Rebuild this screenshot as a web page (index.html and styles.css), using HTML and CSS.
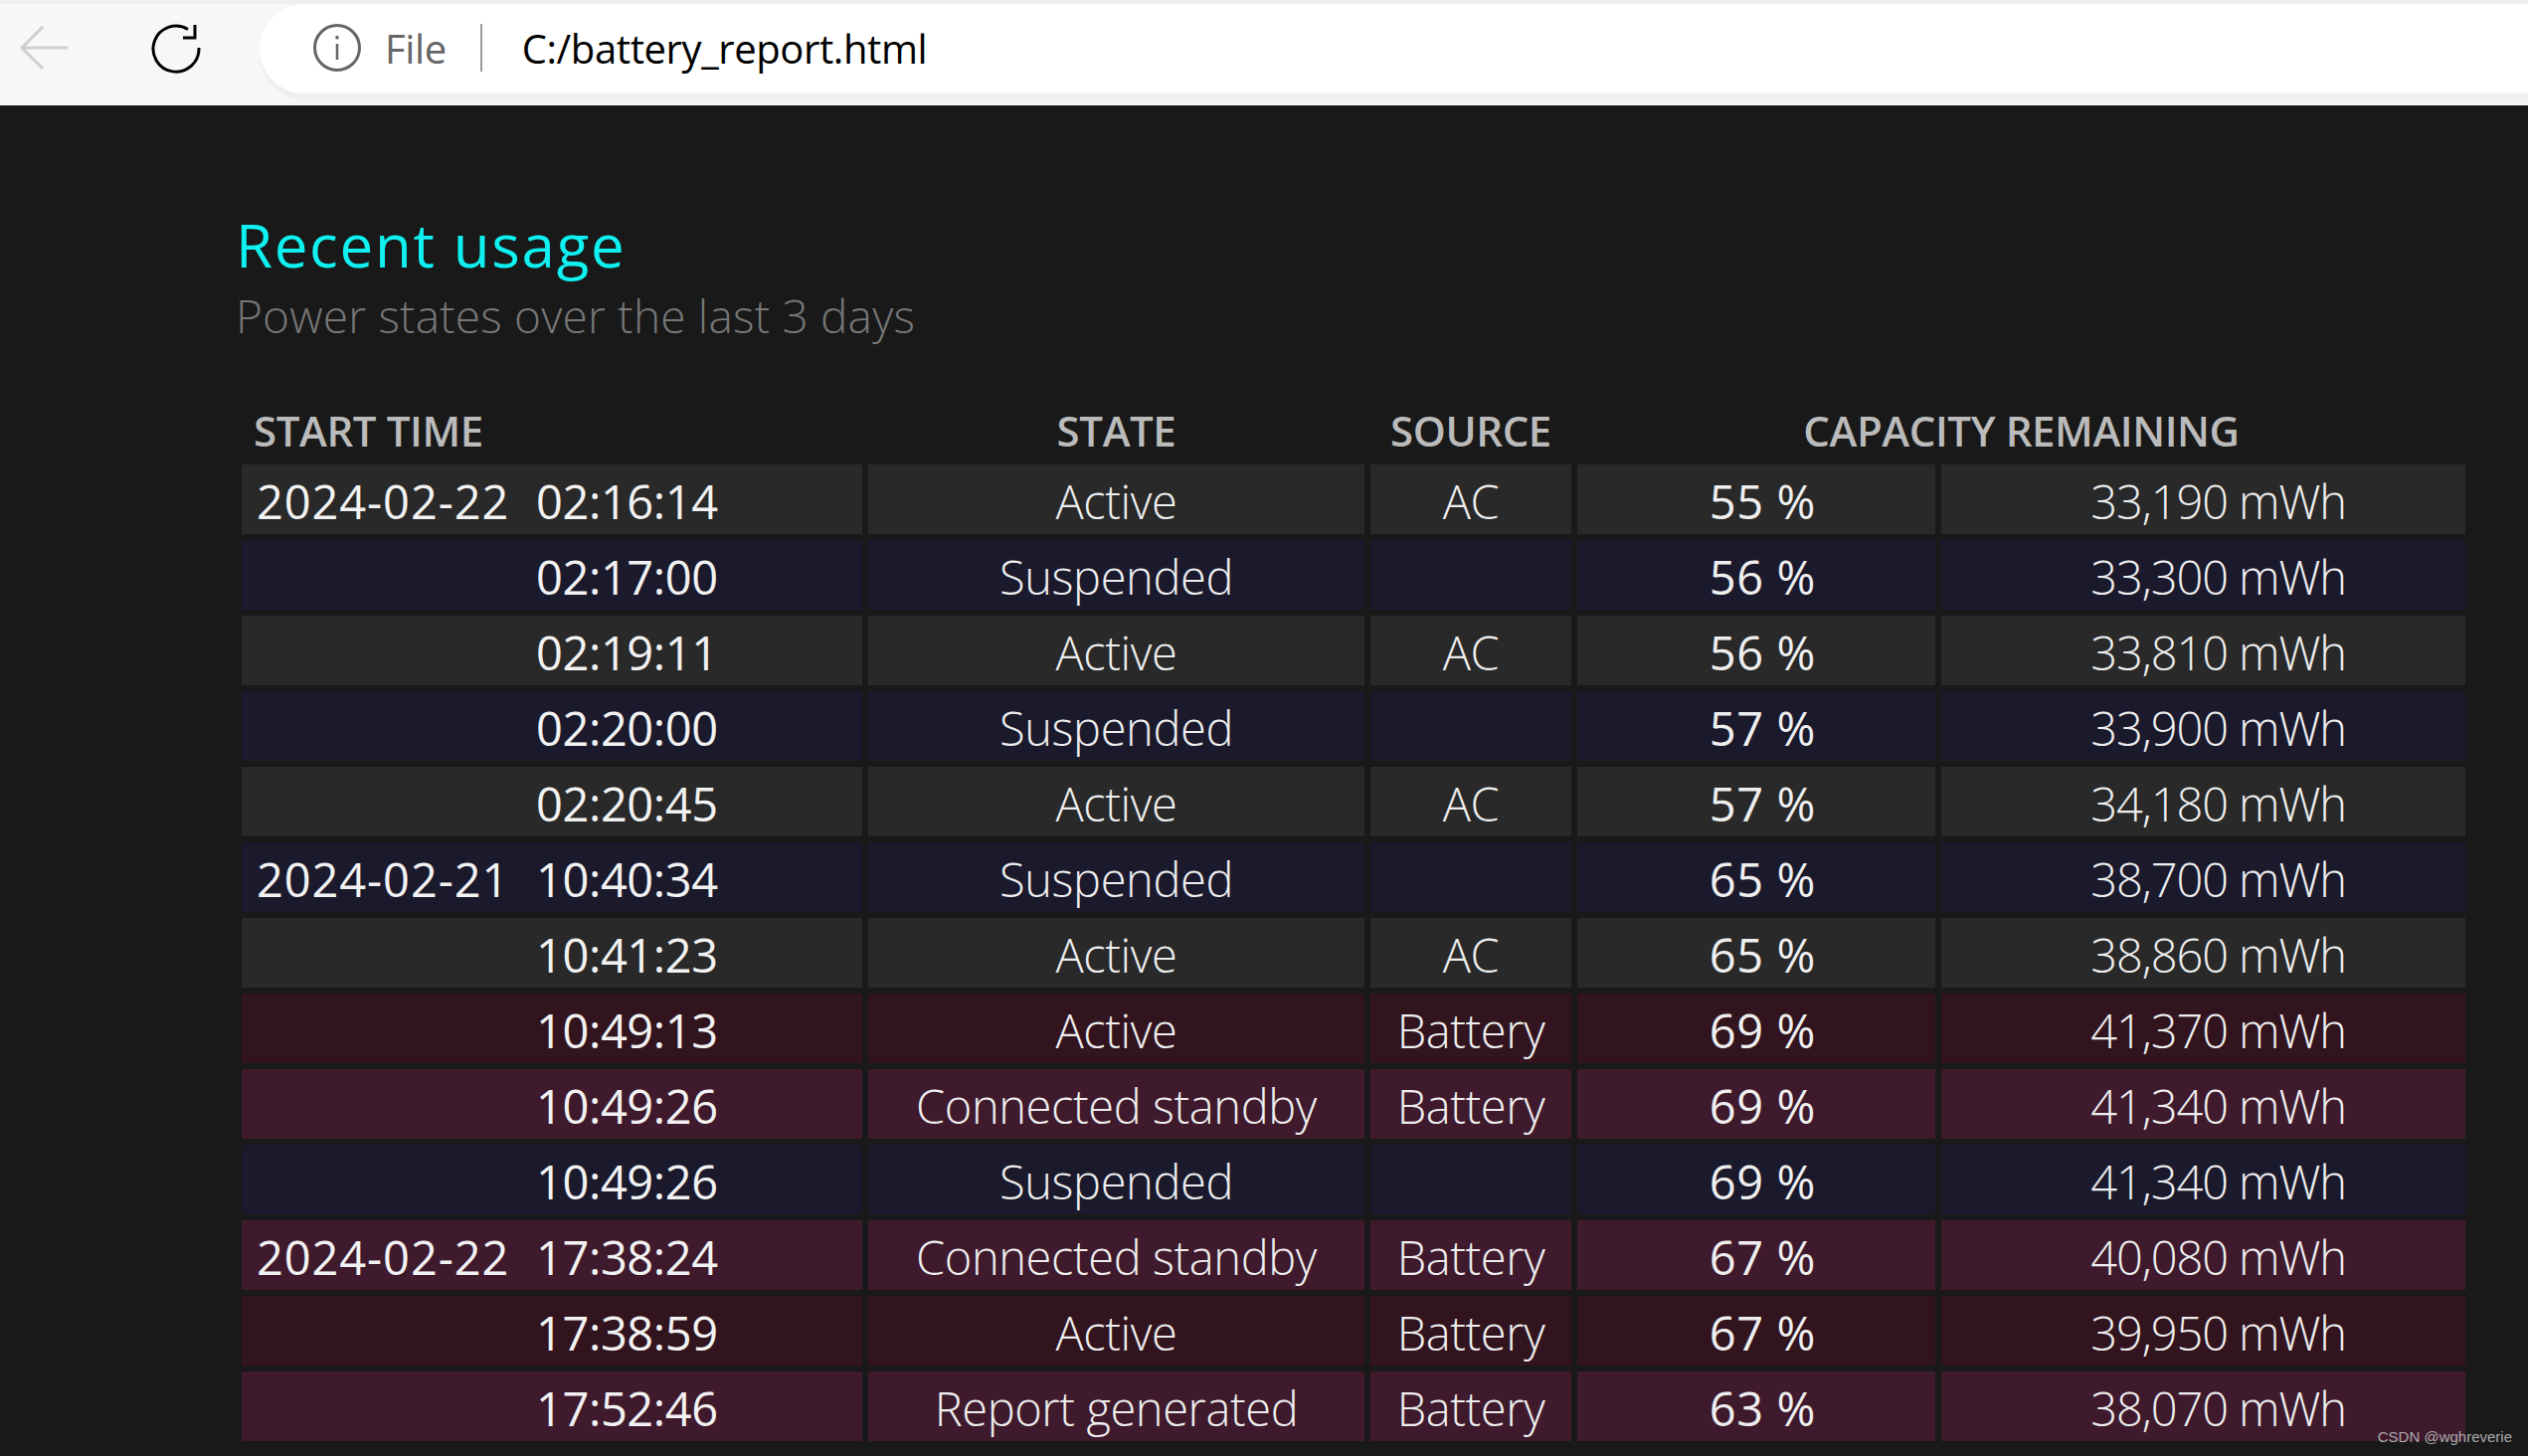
FILE: index.html
```html
<!DOCTYPE html>
<html lang="en">
<head>
<meta charset="utf-8">
<title>Battery report</title>
<link rel="stylesheet" href="styles.css">
</head>
<body>
<header class="toolbar">
  <svg class="nav-back" width="52" height="46" viewBox="0 0 52 46"><path d="M50 23H4M25 2 4 23l21 21" fill="none" stroke="#cfcfcf" stroke-width="3"/></svg>
  <svg class="nav-reload" width="52" height="52" viewBox="0 0 52 52"><path d="M38 7.5A23 23 0 1 0 49 26" fill="none" stroke="#000" stroke-width="3"/><path d="M45 3v13H33" fill="none" stroke="#000" stroke-width="3"/></svg>
  <div class="address">
    <svg class="info" width="48" height="48" viewBox="0 0 48 48"><circle cx="24" cy="24" r="22.5" fill="none" stroke="#666" stroke-width="3"/><rect x="22.7" y="20" width="2.6" height="16" fill="#666"/><rect x="22.5" y="12" width="3" height="3.4" fill="#666"/></svg>
    <span class="scheme">File</span>
    <span class="divider"></span>
    <span class="url">C:/battery_report.html</span>
  </div>
</header>
<main class="content">
  <h1 class="title">Recent usage</h1>
  <p class="subtitle">Power states over the last 3 days</p>
  <table class="usage">
    <colgroup><col class="c1"><col class="c2"><col class="c3"><col class="c4"><col class="c5"></colgroup>
    <thead>
      <tr><th class="left">START TIME</th><th>STATE</th><th>SOURCE</th><th colspan="2">CAPACITY REMAINING</th></tr>
    </thead>
    <tbody>
      <tr class="ac"><td class="when"><span class="date">2024-02-22</span><span class="time">02:16:14</span></td><td class="state">Active</td><td class="state">AC</td><td class="num pct">55 %</td><td class="num">33,190 mWh</td></tr>
      <tr class="sus"><td class="when"><span class="date"></span><span class="time">02:17:00</span></td><td class="state">Suspended</td><td class="state"></td><td class="num pct">56 %</td><td class="num">33,300 mWh</td></tr>
      <tr class="ac"><td class="when"><span class="date"></span><span class="time">02:19:11</span></td><td class="state">Active</td><td class="state">AC</td><td class="num pct">56 %</td><td class="num">33,810 mWh</td></tr>
      <tr class="sus"><td class="when"><span class="date"></span><span class="time">02:20:00</span></td><td class="state">Suspended</td><td class="state"></td><td class="num pct">57 %</td><td class="num">33,900 mWh</td></tr>
      <tr class="ac"><td class="when"><span class="date"></span><span class="time">02:20:45</span></td><td class="state">Active</td><td class="state">AC</td><td class="num pct">57 %</td><td class="num">34,180 mWh</td></tr>
      <tr class="sus"><td class="when"><span class="date">2024-02-21</span><span class="time">10:40:34</span></td><td class="state">Suspended</td><td class="state"></td><td class="num pct">65 %</td><td class="num">38,700 mWh</td></tr>
      <tr class="ac"><td class="when"><span class="date"></span><span class="time">10:41:23</span></td><td class="state">Active</td><td class="state">AC</td><td class="num pct">65 %</td><td class="num">38,860 mWh</td></tr>
      <tr class="bat"><td class="when"><span class="date"></span><span class="time">10:49:13</span></td><td class="state">Active</td><td class="state">Battery</td><td class="num pct">69 %</td><td class="num">41,370 mWh</td></tr>
      <tr class="cs"><td class="when"><span class="date"></span><span class="time">10:49:26</span></td><td class="state">Connected standby</td><td class="state">Battery</td><td class="num pct">69 %</td><td class="num">41,340 mWh</td></tr>
      <tr class="sus"><td class="when"><span class="date"></span><span class="time">10:49:26</span></td><td class="state">Suspended</td><td class="state"></td><td class="num pct">69 %</td><td class="num">41,340 mWh</td></tr>
      <tr class="cs"><td class="when"><span class="date">2024-02-22</span><span class="time">17:38:24</span></td><td class="state">Connected standby</td><td class="state">Battery</td><td class="num pct">67 %</td><td class="num">40,080 mWh</td></tr>
      <tr class="bat"><td class="when"><span class="date"></span><span class="time">17:38:59</span></td><td class="state">Active</td><td class="state">Battery</td><td class="num pct">67 %</td><td class="num">39,950 mWh</td></tr>
      <tr class="cs"><td class="when"><span class="date"></span><span class="time">17:52:46</span></td><td class="state">Report generated</td><td class="state">Battery</td><td class="num pct">63 %</td><td class="num">38,070 mWh</td></tr>
    </tbody>
  </table>
</main>
<div class="watermark">CSDN @wghreverie</div>
</body>
</html>
```
FILE: styles.css
```css
* { box-sizing: border-box; }
html, body { margin: 0; height: 100%; }
body { background: #191919; font-family: "Open Sans", "Liberation Sans", sans-serif; overflow: hidden; color: #eee; }

.toolbar { height: 106px; display: flex; align-items: flex-start; background: #f7f7f7; border-top: 4px solid #efefef; box-shadow: inset 0 -6px 0 #f5f5f5; }
.nav-back { margin: 21px 0 0 18px; flex: none; }
.nav-reload { margin: 18px 0 0 81px; flex: none; }
.address { margin-left: 58px; flex: 1; height: 90px; background: #fff; border-radius: 45px 0 0 45px; box-shadow: 0 6px 0 #efefef; display: flex; align-items: center; padding-left: 54px; }
.info { flex: none; margin-top: -2px; }
.scheme { margin-left: 24px; font-size: 40px; color: #666; letter-spacing: -0.4px; margin-top: -1px; }
.divider { width: 2px; height: 48px; background: #999; margin: -2px 40px 0 34px; }
.url { font-size: 40px; color: #000; letter-spacing: -0.4px; margin-top: -1px; }

.content { padding: 102px 0 0 237px; }
.title { margin: 0; font-size: 60px; line-height: 76px; font-weight: 400; color: #0ff0f0; letter-spacing: 1.7px; }
.subtitle { margin: 2px 0 0; font-size: 46px; line-height: 62px; font-weight: 300; color: #777; letter-spacing: 0.2px; }

.usage { margin-top: 50px; border-collapse: separate; border-spacing: 6px; table-layout: fixed; width: 2248px; }
.c1 { width: 624px; } .c2 { width: 499px; } .c3 { width: 202px; } .c4 { width: 360px; } .c5 { width: 527px; }
th { height: 56px; padding: 0; font-size: 42px; font-weight: 600; color: #bbb; text-align: center; letter-spacing: -0.4px; }
th.left { text-align: left; padding-left: 12px; }
td { height: 70px; padding: 4px 0 0; font-size: 47px; font-weight: 300; text-align: center; white-space: nowrap; letter-spacing: -0.4px; }
.ac td { background: #292929; }
.sus td { background: #1b1a2d; }
.bat td { background: #32141f; }
.cs td { background: #3f1a2d; }
.when { text-align: left; font-weight: 400; color: #f2f2f2; }
td.when { padding-left: 15px; }
.date { display: inline-block; width: 281px; letter-spacing: 0.9px; }
.time { letter-spacing: -0.4px; }
td.num { text-align: right; padding-right: 120px; letter-spacing: -1.1px; }
td.pct { font-weight: 400; letter-spacing: 0.6px; }
.watermark { position: absolute; right: 16px; bottom: 11px; font: 15px "Liberation Sans", sans-serif; color: #aaa; }
```
